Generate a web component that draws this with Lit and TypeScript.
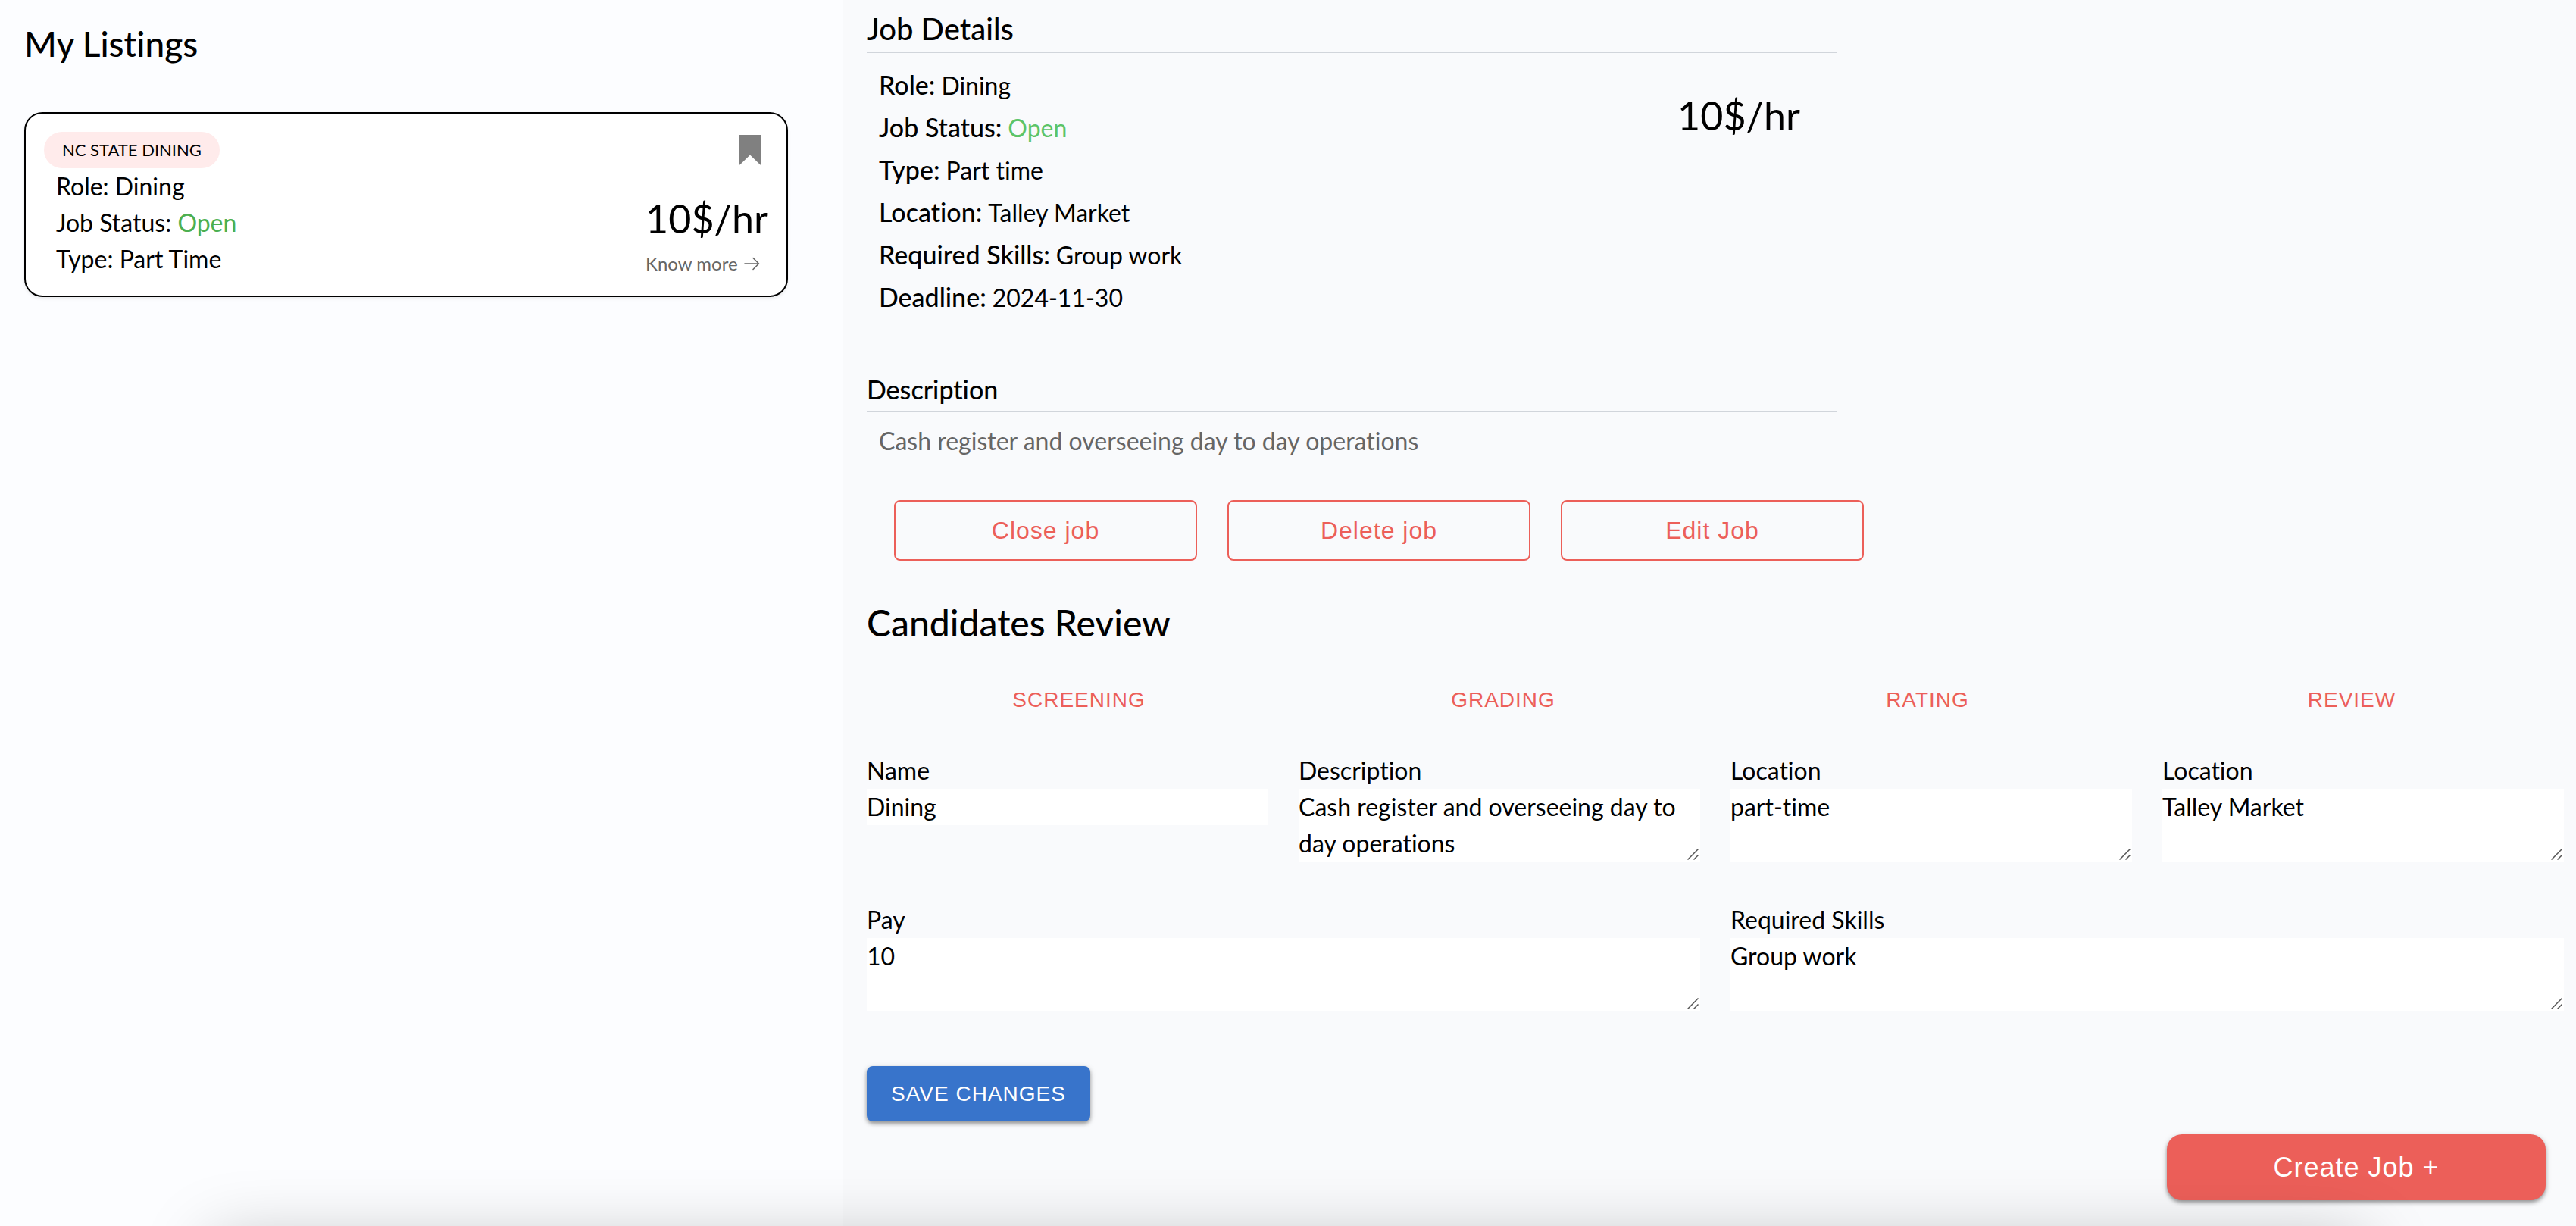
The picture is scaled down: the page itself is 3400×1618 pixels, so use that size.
import { LitElement, html, css, svg } from "lit";
import { customElement, property, state } from "lit/decorators.js";

interface Job {
  employer: string;
  role: string;
  status: string;
  type: string;
  pay: string;
  location: string;
  skills: string;
  deadline: string;
  description: string;
}

const job: Job = {
  employer: "NC STATE DINING",
  role: "Dining",
  status: "Open",
  type: "part-time",
  pay: "10",
  location: "Talley Market",
  skills: "Group work",
  deadline: "2024-11-30",
  description: "Cash register and overseeing day to day operations",
};

const bookmark = svg`<path d="M1 0h28a1 1 0 0 1 1 1v37.4c0 1.2-1 1.6-1.800.9L15 26.4 1.800 39.3C1 40 0 39.6 0 38.4V1a1 1 0 0 1 1-1z" fill="#808080"/>`;
const arrow = svg`<path d="M1 9h18M12 1.500l7.500 7.500-7.500 7.500" fill="none" stroke="#666" stroke-width="1.600" stroke-linejoin="round" stroke-linecap="round"/>`;

@customElement("listing-card")
export class ListingCard extends LitElement {
  @property({ attribute: false }) job!: Job;

  static styles = css`
    :host {
      display: block;
    }
    .card {
      display: flex;
      justify-content: space-between;
      padding: 24px;
      border: 2px solid #000;
      border-radius: 24px;
      background: #fff;
      box-shadow: 0 2px 4px rgba(0, 0, 0, 0.08);
    }
    .badge {
      display: inline-block;
      padding: 0 24px;
      border-radius: 24px;
      background: #ffebeb;
      font-size: 22px;
      line-height: 48px;
    }
    .facts {
      margin: 0;
      padding: 0 0 0 16px;
      list-style: none;
      font-size: 32px;
      line-height: 48px;
    }
    .open {
      color: #4caf50;
    }
    .side {
      display: flex;
      flex-direction: column;
      align-items: flex-start;
    }
    .save {
      display: flex;
      align-self: flex-end;
      margin: 0 9px 0 0;
      padding: 4px 0 38px;
      border: 0;
      background: none;
    }
    .pay {
      font-size: 52px;
      line-height: 64px;
    }
    .more {
      display: flex;
      align-items: center;
      gap: 8px;
      margin-top: 12px;
      color: #666;
      font-size: 24px;
      line-height: 32px;
      text-decoration: none;
    }
  `;

  render() {
    const j = this.job;
    return html`
      <article class="card">
        <div>
          <span class="badge">${j.employer}</span>
          <ul class="facts">
            <li>Role: ${j.role}</li>
            <li>Job Status: <span class="open">${j.status}</span></li>
            <li>Type: Part Time</li>
          </ul>
        </div>
        <div class="side">
          <button class="save" aria-label="Bookmark">
            <svg width="30" height="40" viewBox="0 0 30 40">${bookmark}</svg>
          </button>
          <span class="pay">${j.pay}$/hr</span>
          <a class="more" href="#details">Know more
            <svg width="21" height="18" viewBox="0 0 21 18">${arrow}</svg>
          </a>
        </div>
      </article>
    `;
  }
}

@customElement("job-details")
export class JobDetails extends LitElement {
  @property({ attribute: false }) job!: Job;

  static styles = css`
    :host {
      display: block;
    }
    h2,
    h3 {
      margin: 0;
      border-bottom: 2px solid #d1d5db;
      font-weight: 500;
    }
    h2 {
      font-size: 40px;
      line-height: 60px;
    }
    h3 {
      font-size: 34px;
      line-height: 56px;
    }
    .summary {
      display: flex;
      justify-content: space-between;
      align-items: flex-start;
      padding: 14px 48px 66px 16px;
    }
    .facts {
      margin: 0;
    }
    .fact {
      display: flex;
      align-items: baseline;
      gap: 8px;
      height: 56px;
      line-height: 56px;
    }
    dt {
      font-size: 34px;
      font-weight: 500;
    }
    dd {
      margin: 0;
      font-size: 32px;
    }
    .open {
      color: #5cc467;
    }
    .pay {
      margin-top: 36px;
      font-size: 52px;
      line-height: 64px;
    }
    .description {
      margin: 0;
      padding: 14px 16px 54px;
      color: #666;
      font-size: 32px;
      line-height: 48px;
    }
    .actions {
      display: grid;
      grid-template-columns: repeat(3, 1fr);
      gap: 40px;
      margin: 0 -36px 0 36px;
    }
    button {
      height: 80px;
      border: 2px solid #ec5f59;
      border-radius: 8px;
      background: none;
      color: #ec5f59;
      font: 32px "Liberation Sans", Arial, sans-serif;
      letter-spacing: 1px;
    }
  `;

  render() {
    const j = this.job;
    const facts = [
      ["Role", j.role],
      ["Job Status", j.status],
      ["Type", "Part time"],
      ["Location", j.location],
      ["Required Skills", j.skills],
      ["Deadline", j.deadline],
    ];
    return html`
      <h2 id="details">Job Details</h2>
      <div class="summary">
        <dl class="facts">
          ${facts.map(
            ([name, value]) => html`<div class="fact">
              <dt>${name}:</dt>
              <dd class=${name === "Job Status" ? "open" : ""}>${value}</dd>
            </div>`
          )}
        </dl>
        <span class="pay">${j.pay}$/hr</span>
      </div>
      <h3>Description</h3>
      <p class="description">${j.description}</p>
      <div class="actions">
        <button>Close job</button>
        <button>Delete job</button>
        <button>Edit Job</button>
      </div>
    `;
  }
}

@customElement("candidates-review")
export class CandidatesReview extends LitElement {
  @property({ attribute: false }) job!: Job;

  static styles = css`
    :host {
      display: block;
    }
    h2 {
      margin: 50px 0 34px;
      font-size: 48px;
      font-weight: 500;
      line-height: 64px;
    }
    .tabs {
      display: grid;
      grid-template-columns: repeat(4, 1fr);
    }
    .tab {
      height: 72px;
      border: 0;
      background: none;
      color: #ec5f59;
      font: 28px "Liberation Sans", Arial, sans-serif;
      letter-spacing: 1px;
    }
    .form {
      display: grid;
      grid-template-columns: repeat(4, 1fr);
      gap: 53px 40px;
      margin-top: 33px;
    }
    .field {
      display: flex;
      flex-direction: column;
      font-size: 32px;
      line-height: 48px;
    }
    .wide {
      grid-column: span 2;
    }
    input,
    textarea {
      display: block;
      box-sizing: border-box;
      width: 100%;
      margin: 0;
      padding: 0;
      border: 0;
      border-radius: 0;
      background: #fff;
      color: #000;
      font: inherit;
      font-variant-ligatures: none;
    }
    input {
      height: 48px;
    }
    textarea {
      height: 96px;
      overflow: hidden;
      resize: none;
    }
    .box {
      position: relative;
    }
    .grip {
      position: absolute;
      right: 2px;
      bottom: 2px;
      pointer-events: none;
    }
    .submit {
      justify-self: start;
      grid-column: 1 / -1;
      height: 73px;
      margin-top: 20px;
      padding: 0 32px;
      border: 0;
      border-radius: 8px;
      background: #3874cb;
      box-shadow: 0 3px 5px rgba(0, 0, 0, 0.35), 0 2px 10px rgba(0, 0, 0, 0.12);
      color: #fff;
      font: 28px "Liberation Sans", Arial, sans-serif;
      letter-spacing: 1px;
    }
  `;

  private area(id: string, label: string, value: string, wide = false) {
    return html`<div class="field ${wide ? "wide" : ""}">
      <label for=${id}>${label}</label>
      <div class="box">
        <textarea id=${id} rows="2" .value=${value}></textarea>
        <svg class="grip" width="15" height="15" viewBox="0 0 15 15">
          <path d="M0.500 14.500L14.500 0.500M8.500 14.500L14.500 8.500" stroke="#555" stroke-width="1.500" fill="none" />
        </svg>
      </div>
    </div>`;
  }

  render() {
    const j = this.job;
    return html`
      <h2>Candidates Review</h2>
      <div class="tabs">
        ${["SCREENING", "GRADING", "RATING", "REVIEW"].map((t) => html`<button class="tab">${t}</button>`)}
      </div>
      <form class="form" @submit=${(e: Event) => e.preventDefault()}>
        <div class="field">
          <label for="name">Name</label>
          <input id="name" type="text" .value=${j.role} />
        </div>
        ${this.area("description", "Description", j.description)}
        ${this.area("type", "Location", j.type)}
        ${this.area("location", "Location", j.location)}
        ${this.area("pay", "Pay", j.pay, true)}
        ${this.area("skills", "Required Skills", j.skills, true)}
        <button class="submit" type="submit">SAVE CHANGES</button>
      </form>
    `;
  }
}

@customElement("app-root")
export class AppRoot extends LitElement {
  @state() private job = job;

  static styles = css`
    :host {
      position: relative;
      display: grid;
      grid-template-columns: 139fr 286fr;
      min-height: 100vh;
      overflow: hidden;
      background: #fcfdff;
      color: #000;
      font-family: Lato, "Open Sans", sans-serif;
      font-variant-ligatures: none;
    }
    .listings {
      padding: 26px 72px 32px 32px;
    }
    h1 {
      margin: 0 0 58px;
      font-size: 46px;
      font-weight: 500;
      line-height: 64px;
    }
    .main {
      display: flex;
      flex-direction: column;
      box-sizing: border-box;
      padding: 8px 16px 34px 32px;
      background: #f9fafc;
    }
    .details {
      width: calc(100% * 4 / 7);
    }
    .create {
      align-self: flex-end;
      width: 500px;
      height: 87px;
      margin: 17px 24px 0 0;
      border: 0;
      border-radius: 20px;
      background: #ec5f59;
      box-shadow: 0 3px 5px rgba(0, 0, 0, 0.35), 0 2px 10px rgba(0, 0, 0, 0.12);
      color: #fff;
      font: 36px "Liberation Sans", Arial, sans-serif;
      letter-spacing: 1px;
    }
    .shade {
      position: absolute;
      right: 280px;
      bottom: -120px;
      left: 280px;
      height: 100px;
      box-shadow: 0 0 90px rgba(0, 0, 0, 0.25);
      pointer-events: none;
    }
  `;

  render() {
    return html`
      <aside class="listings">
        <h1>My Listings</h1>
        <listing-card .job=${this.job}></listing-card>
      </aside>
      <main class="main">
        <job-details class="details" .job=${this.job}></job-details>
        <candidates-review .job=${this.job}></candidates-review>
        <button class="create">Create Job +</button>
      </main>
      <div class="shade"></div>
    `;
  }
}
